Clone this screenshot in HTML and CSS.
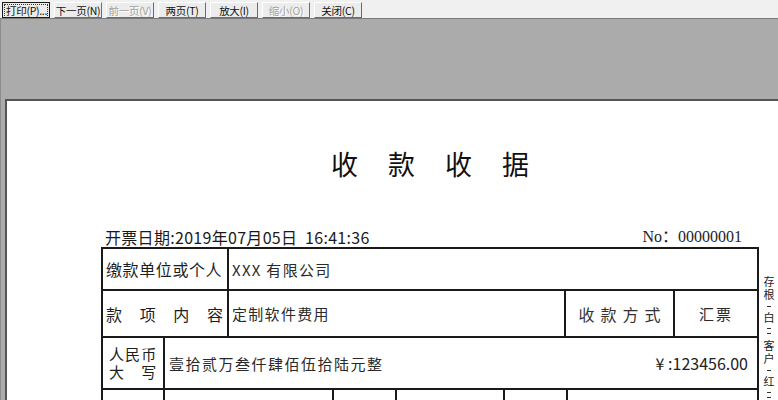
FILE: index.html
```html
<!DOCTYPE html>
<html lang="zh-CN">
<head>
  <meta charset="UTF-8" />
  <title>打印预览 - 收款收据</title>
  <link rel="stylesheet" href="styles.css">
</head>
<body>
  <!-- preview toolbar -->
  <div class="toolbar">
    <button class="btn focus"><span>打印(P)...</span></button>
    <button class="btn">下一页(N)</button>
    <button class="btn off">前一页(V)</button>
    <button class="btn">两页(T)</button>
    <button class="btn">放大(I)</button>
    <button class="btn off">缩小(O)</button>
    <button class="btn">关闭(C)</button>
  </div>

  <div class="viewer">
    <div class="paper">
      <div class="receipt">
        <h1 class="title">收款收据</h1>

        <div class="meta">
          <span class="date">开票日期:2019年07月05日  16:41:36</span>
          <span class="no">No：00000001</span>
        </div>

        <div class="body">
          <div class="sheet">
            <div class="row r1">
              <div class="cell label">缴款单位或个人</div>
              <div class="cell value">XXX 有限公司</div>
            </div>
            <div class="row r2">
              <div class="cell label wide"><span class="spread">款 项 内 容</span></div>
              <div class="cell value">定制软件费用</div>
              <div class="cell center way">收款方式</div>
              <div class="cell center value">汇票</div>
            </div>
            <div class="row r3">
              <div class="cell label">
                <div class="two spread">人民币<br>大 写</div>
              </div>
              <div class="cell amount">
                <span class="value words">壹拾贰万叁仟肆佰伍拾陆元整</span>
                <span class="sum">¥ :123456.00</span>
              </div>
            </div>
            <div class="row r4">
              <div class="cell"></div>
              <div class="cell"></div>
              <div class="cell"></div>
              <div class="cell"></div>
              <div class="cell"></div>
              <div class="cell"></div>
            </div>
          </div>

          <!-- copy colours, printed down the margin -->
          <div class="side">
            <span class="ch">存根</span>
            <i class="d"></i>
            <span class="ch">白</span>
            <i class="dd"></i>
            <span class="ch">客户</span>
            <i class="d"></i>
            <span class="ch">红</span>
            <i class="dd"></i>
          </div>
        </div>
      </div>
    </div>
  </div>
</body>
</html>
```

FILE: styles.css
```css
html, body {
  margin: 0;
  padding: 0;
}
body {
  width: 778px;
  height: 400px;
  overflow: hidden;
  background: #ababab;
  font-family: "Noto Sans CJK SC", "Noto Sans", sans-serif;
  color: #1e1e1e;
}

/* toolbar */
.toolbar {
  display: flex;
  gap: 4px;
  height: 19px;
  padding: 2px 0 0 2px;
  box-sizing: border-box;
  background: #f0f0f0;
  border-bottom: 1px solid #7a7a7a;
}
.btn {
  width: 48px;
  height: 16px;
  padding: 0;
  margin: 0;
  background: #ececec;
  border: 1px solid;
  border-color: #ffffff #6b6b6b #6b6b6b #ffffff;
  font-family: "Noto Sans CJK SC", sans-serif;
  font-size: 10.5px;
  line-height: 13px;
  letter-spacing: -0.3px;
  color: #111;
  white-space: nowrap;
  overflow: hidden;
}
.btn.off {
  color: #a2a2a2;
  text-shadow: 1px 1px 0 #fff;
}
.btn.focus {
  border-color: #1a1a1a;
  padding: 1px;
}
.btn.focus span {
  display: block;
  height: 12px;
  line-height: 11px;
  border: 1px dotted #333;
  text-align: left;
  padding-left: 1px;
}

/* preview area */
.viewer {
  padding: 80px 0 0 4px;
  border-left: 1px solid #8c8c8c;
}
.paper {
  width: 900px;
  min-height: 320px;
  background: #fff;
  border-top: 2px solid #555;
  border-left: 2px solid #555;
}
.receipt {
  margin-left: 94px;
  width: 680px;
}
.title {
  width: 658px;
  margin: 49px 0 0;
  padding-left: 30px;
  box-sizing: border-box;
  text-align: center;
  font-size: 27px;
  font-weight: normal;
  line-height: 27px;
  letter-spacing: 30px;
  color: #111;
}
.meta {
  width: 658px;
  margin-top: 50px;
  display: flex;
  justify-content: space-between;
  padding: 0 17px 0 4px;
  box-sizing: border-box;
  height: 20px;
  line-height: 20px;
  font-size: 16px;
}
.date {
  white-space: pre;
  letter-spacing: 0.3px;
  color: #1a1a1a;
}
.no {
  font-family: "Liberation Serif", "Noto Sans CJK SC", serif;
  font-size: 16px;
}

/* receipt table */
.body {
  display: flex;
}
.sheet {
  width: 658px;
  border: 2px solid #1a1a1a;
  border-bottom: none;
  box-sizing: border-box;
}
.row {
  display: grid;
  border-bottom: 2px solid #1a1a1a;
  box-sizing: border-box;
}
.r1 { height: 42px; grid-template-columns: 126px 1fr; }
.r2 { height: 47px; grid-template-columns: 126px 337px 109px 1fr; }
.r3 { height: 52px; grid-template-columns: 62px 1fr; }
.r4 { height: 40px; grid-template-columns: 62px 169px 63px 108px 63px 1fr; }

.cell {
  display: flex;
  align-items: center;
  border-right: 2px solid #1a1a1a;
  box-sizing: border-box;
  min-width: 0;
}
.cell:last-child {
  border-right: none;
}
.label {
  font-size: 16px;
  letter-spacing: 0.6px;
  padding-left: 3px;
  color: #1e1e1e;
}
.spread {
  display: block;
  width: 100%;
  text-align: justify;
  text-align-last: justify;
  letter-spacing: 0;
}
.label.wide {
  padding: 0 4px 0 3px;
}
.value {
  font-size: 15px;
  letter-spacing: 1.3px;
  padding-left: 3px;
  color: #2a2a2a;
}
.center {
  justify-content: center;
}
.way {
  font-size: 16px;
  letter-spacing: 6px;
  padding-left: 6px;
  color: #333;
}
.r2 .center.value {
  padding-left: 0;
  letter-spacing: 2px;
}
.r3 .label {
  padding-left: 6px;
}
.two {
  width: 48px;
  font-size: 15px;
  line-height: 18px;
  letter-spacing: 0.8px;
  white-space: nowrap;
}
.amount {
  justify-content: space-between;
  padding: 0 9px 0 1px;
}
.words {
  letter-spacing: 1.5px;
}
.sum {
  font-size: 16px;
  white-space: pre;
  color: #222;
}

/* margin note */
.side {
  display: flex;
  flex-direction: column;
  align-items: center;
  width: 14px;
  padding: 28px 0 0 3px;
  font-size: 11px;
  line-height: 13px;
  color: #222;
}
.side .ch {
  width: 11px;
  word-break: break-all;
  text-align: center;
}
.side .d {
  width: 4px;
  height: 10px;
  background: linear-gradient(#333, #333) center / 4px 1px no-repeat;
}
.side .dd {
  width: 4px;
  height: 15px;
  background:
    linear-gradient(#333, #333) center 4px / 4px 1px no-repeat,
    linear-gradient(#333, #333) center 9px / 4px 1px no-repeat;
}
```
